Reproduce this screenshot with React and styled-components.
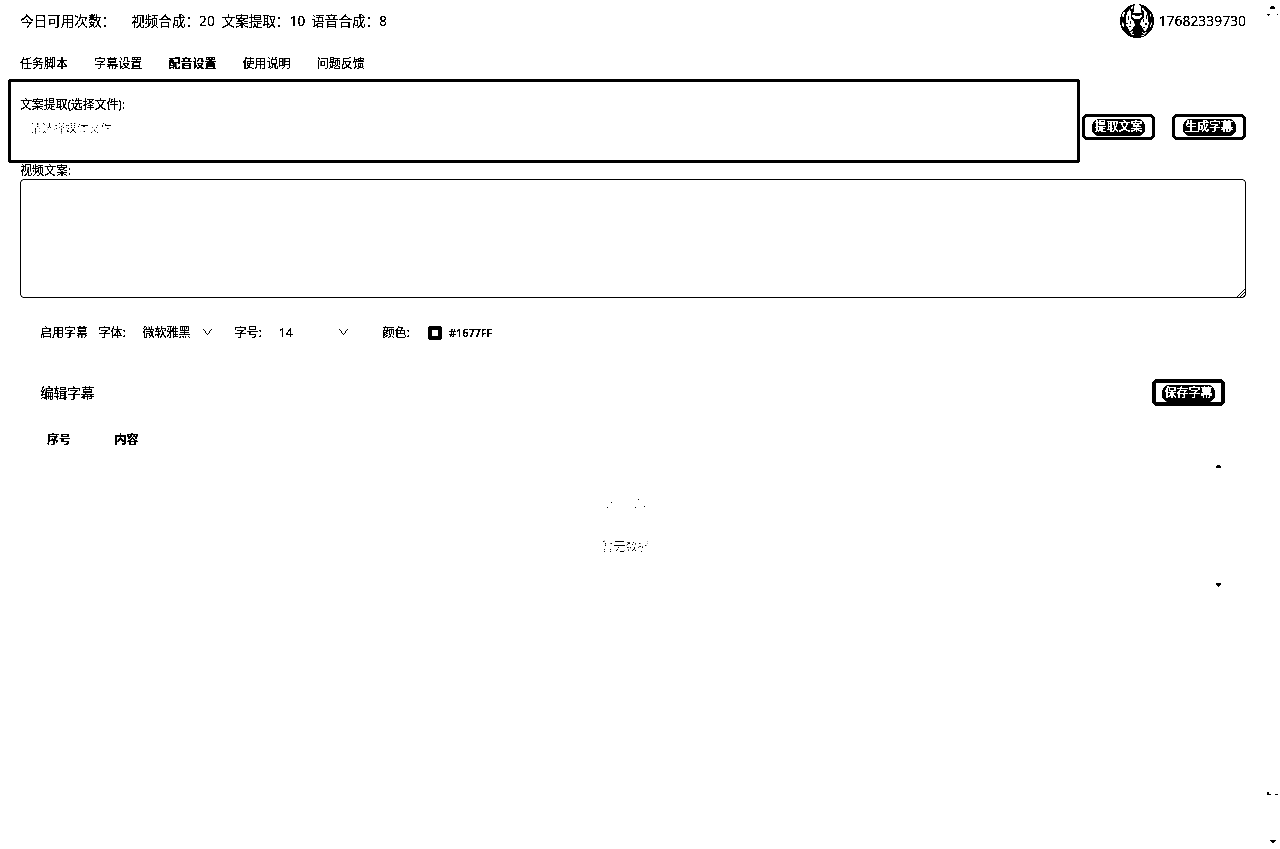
import React from "react";
import styled, { createGlobalStyle } from "styled-components";

const GlobalStyle = createGlobalStyle`
  * { box-sizing: border-box; }
  body {
    margin: 0;
    background: #fff;
    color: #000;
    font-family: "Noto Sans", "Noto Sans CJK SC", sans-serif;
    font-size: 12px;
    line-height: 16px;
    overflow: hidden;
  }
`;

const Page = styled.div`
  display: flex;
  width: 1280px;
  height: 849px;
  background: #fff;
  filter: grayscale(1) contrast(30);
  -webkit-text-stroke: 0.2px currentColor;
`;

const Main = styled.main`
  flex: 1;
  min-width: 0;
  display: flex;
  flex-direction: column;
`;

const Header = styled.header`
  display: flex;
  align-items: center;
  height: 42px;
  padding: 0 20px;
  font-size: 13.6px;
  white-space: pre;
`;

const Quota = styled.span`
  margin-right: ${(p) => p.$gap || 0}px;
`;

const User = styled.div`
  display: flex;
  align-items: center;
  gap: 5px;
  margin-left: auto;
  font-size: 13.9px;
`;

const Tabs = styled.nav`
  display: flex;
  align-items: center;
  gap: 26.2px;
  height: 37px;
  padding: 6px 20px 0;
`;

const Tab = styled.span`
  font-weight: ${(p) => (p.$active ? 600 : 400)};
`;

const ExtractRow = styled.section`
  display: flex;
  align-items: center;
  padding: 0 20px 0 8px;
`;

const FilePanel = styled.div`
  width: 1072px;
  height: 84px;
  padding: 15px 9px;
  border: 3px solid #000;
  border-radius: 3px;
  letter-spacing: -0.15px;
`;

const Placeholder = styled.div`
  margin-top: ${(p) => p.$top || 8}px;
  padding-left: ${(p) => p.$indent || 0}px;
  color: #696969;
  letter-spacing: ${(p) => p.$spacing || 0}px;
  -webkit-text-stroke: 0;
`;

const Button = styled.button`
  width: ${(p) => p.$w || 73}px;
  height: ${(p) => p.$h || 26}px;
  margin: 0 0 0 ${(p) => p.$left || 0}px;
  padding: 1px 0 0;
  position: relative;
  top: ${(p) => p.$shift || 0}px;
  border: ${(p) => p.$border || 3}px solid #000;
  border-radius: 5px;
  background: #fff;
  color: #fff;
  font: inherit;
  font-size: 12px;
  line-height: 18px;
`;

/* White label inside a dark rounded plate */
const Label = styled.span`
  display: block;
  width: 53px;
  height: 17px;
  margin: 0 auto;
  border-radius: 7px;
  background: #000;
  line-height: 16px;
  text-align: center;
  white-space: nowrap;
  -webkit-text-stroke: 0.3px #fff;
`;

const ScriptSection = styled.section`
  display: flex;
  flex-direction: column;
  padding: 0 20px;
`;

const ScriptInput = styled.textarea`
  display: block;
  width: 1226px;
  height: 119px;
  border: 1px solid #000;
  border-radius: 4px;
  background: #fff;
  outline: 0;
  resize: none;
`;

const InputFrame = styled.div`
  position: relative;
`;

const Grip = styled.svg`
  position: absolute;
  right: 1px;
  bottom: 1px;
  width: 8px;
  height: 8px;
`;

const Options = styled.section`
  display: flex;
  align-items: center;
  height: 69px;
  padding-left: 40px;
`;

const Cell = styled.div`
  display: flex;
  align-items: center;
  width: ${(p) => p.$w}px;
  flex: none;
  white-space: nowrap;
`;

const Swatch = styled.span`
  width: 14px;
  height: 14px;
  margin-right: 7px;
  border: 4px solid #000;
  border-radius: 2px;
  background: #fff;
`;

const ColorCode = styled.span`
  font-size: 11.1px;
  font-weight: 600;
  letter-spacing: -0.15px;
`;

const EditBar = styled.section`
  display: flex;
  align-items: center;
  justify-content: space-between;
  height: 51px;
  padding: 0 41px 0 40px;
  font-size: 13.6px;
`;

const TableHead = styled.div`
  display: flex;
  align-items: flex-start;
  height: 41px;
  padding: 14px 0 0 47px;
  font-weight: 600;
`;

const TableBody = styled.div`
  display: flex;
  height: 130px;
  padding-right: 45px;
`;

const Empty = styled.div`
  flex: 1;
  display: flex;
  flex-direction: column;
  align-items: center;
  padding: 40px 0 0 36px;
`;

const Track = styled.div`
  display: flex;
  flex-direction: column;
  align-items: center;
  justify-content: space-between;
  width: 6px;
  padding: ${(p) => p.$pad};
`;

const PageTrack = styled.aside`
  display: flex;
  flex-direction: column;
  align-items: flex-end;
  width: 14px;
  padding: 6px 2px 5px 0;
`;

const TrackGap = styled.div`
  flex: 1;
`;

const Chevron = () => (
  <svg width="9" height="7" viewBox="0 0 9 7" shapeRendering="crispEdges">
    <path d="M0 0h1v1h1v1h1v2h1v1h1V4h1V2h1V1h1V0h1v1H8v1H7v2H6v1H5v1H4V5H3V4H2V2H1V1H0z" />
  </svg>
);

const Arrow = ({ down }) => (
  <svg width="5" height="4" viewBox="0 0 5 4" shapeRendering="crispEdges">
    <path d={down ? "M0 0H5V2H4V3H3V4H2V3H1V2H0Z" : "M1 0H4V1H5V3H0V1H1Z"} />
  </svg>
);

const Avatar = () => (
  <svg width="34" height="34" viewBox="0 0 34 34">
    <circle cx="17" cy="17" r="17" />
    <g fill="#fff">
      <path d="M15 0h4l2 3v5l1 1h-9l1-2V3z" />
      <path d="M12 11h3v1h5v-1h2v2l-3 2h-4l-3-2z" />
      <path d="m7 8 3-3 1 4v5l3 4 1 3-2 3-3 4-2-4-2-3v-7z" />
      <path d="m24 5 3 4 1 5 1 4-1 5-3 5-3-5-2-3 1-3 3-4V9z" />
      <path d="M2 11l2-4 1 2-2 5zM30 9l2 5-2-2zM2 18l2 2v4l-2-3zM31 17l1 3-2 4zM7 26l3 2 3-1-1 3zM21 27l3 2 4-2-4 4z" />
      <path d="M11 3l2-1-1 5zM22 3l2 2-1 4zM9 31l5-1v1zM20 31h5l-2 1z" />
    </g>
    <path d="M8 12h1v4H8zM6 19h2v1H6zM9 22h2v1H9zM26 11h1v4h-1zM25 19h2v2h-2zM28 16h1v2h-1zM23 23h2v1h-2zM10 17h1v3h-1zM23 15h1v3h-1z" />
  </svg>
);

const tabs = ["任务脚本", "字幕设置", "配音设置", "使用说明", "问题反馈"];

export default function App() {
  return (
    <>
      <GlobalStyle />
      <Page>
        <Main>
          <Header>
            <Quota $gap={16}>今日可用次数：</Quota>
            <Quota $gap={7}>视频合成：20</Quota>
            <Quota $gap={6}>文案提取：10</Quota>
            <Quota>语音合成：8</Quota>
            <User>
              <Avatar />
              <span>17682339730</span>
            </User>
          </Header>
          <Tabs>
            {tabs.map((name) => (
              <Tab key={name} $active={name === "配音设置"}>{name}</Tab>
            ))}
          </Tabs>
          <ExtractRow>
            <FilePanel>
              <div>文案提取(选择文件):</div>
              <Placeholder $indent={10} $spacing={-0.3}>请选择媒体文件</Placeholder>
            </FilePanel>
            <Button $left={2} $shift={6}><Label>提取文案</Label></Button>
            <Button $left={17} $w={74} $shift={6}><Label>生成字幕</Label></Button>
          </ExtractRow>
          <ScriptSection>
            <div>视频文案:</div>
            <InputFrame>
              <ScriptInput aria-label="视频文案" />
              <Grip viewBox="0 0 8 8" shapeRendering="crispEdges">
                <path d="M0 8 8 0M3 8 8 3M6 8 8 6" stroke="#000" />
              </Grip>
            </InputFrame>
          </ScriptSection>
          <Options>
            <Cell $w={58.5}>启用字幕</Cell>
            <Cell $w={44}>字体:</Cell>
            <Cell $w={60.5}>微软雅黑</Cell>
            <Cell $w={31.5}><Chevron /></Cell>
            <Cell $w={44.5}>字号:</Cell>
            <Cell $w={60}>14</Cell>
            <Cell $w={43.5}><Chevron /></Cell>
            <Cell $w={45.5}>颜色:</Cell>
            <Cell><Swatch /><ColorCode>#1677FF</ColorCode></Cell>
          </Options>
          <EditBar>
            <span>编辑字幕</span>
            <Button $border={4} $h={27}><Label>保存字幕</Label></Button>
          </EditBar>
          <TableHead>
            <Cell $w={67.5}>序号</Cell>
            <Cell>内容</Cell>
          </TableHead>
          <TableBody>
            <Empty>
              <svg width="46" height="28" viewBox="0 0 46 28" shapeRendering="crispEdges">
                <path d="M4 8h1v1H4zM8 3h1v1H8zM32 8h1v1h-1zM34 -1h1v1h-1zM35 0h1v1h-1zM41 7h1v1h-1z" />
              </svg>
              <Placeholder $top={12}>暂无数据</Placeholder>
            </Empty>
            <Track $pad="6px 0 2px">
              <Arrow />
              <Arrow down />
            </Track>
          </TableBody>
        </Main>
        <PageTrack>
          <svg width="12" height="11" viewBox="0 0 12 11" shapeRendering="crispEdges">
            <path d="M5 0h3v1h1v2H4V1h1zM1 8h3v1H3v1H2V9H1zM11 8h1v1h-1z" />
          </svg>
          <TrackGap />
          <svg width="12" height="52" viewBox="0 0 12 52" shapeRendering="crispEdges">
            <path d="M1 0h2v2h2v1H1zM9 2h3v1H9zM4 48h6v1H9v1H8v1H6v-1H5v-1H4z" />
          </svg>
        </PageTrack>
      </Page>
    </>
  );
}
